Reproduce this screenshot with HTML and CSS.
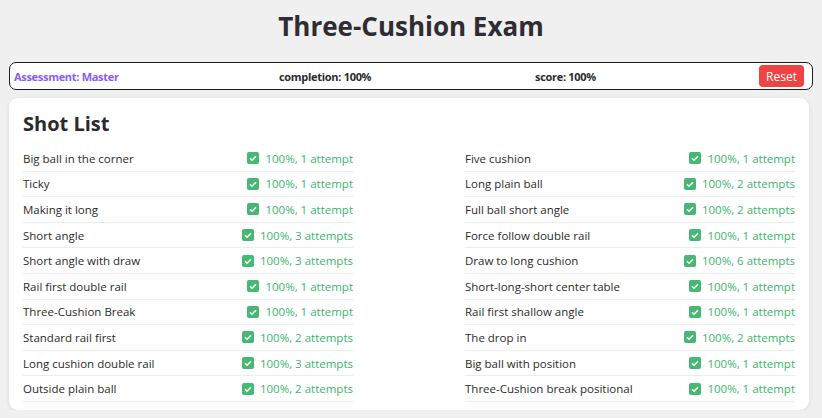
FILE: index.html
```html
<!DOCTYPE html>
<html lang="en">
<head>
    <meta charset="UTF-8">
    <meta name="viewport" content="width=device-width, initial-scale=1.0">
    <title>Three-Cushion Exam</title>
    <link rel="stylesheet" href="styles.css">
</head>
<body>

    <h1 class="title">Three-Cushion Exam</h1>

    <div class="status-bar">
        <span class="level">Assessment: Master</span>
        <span class="stat">completion: 100%</span>
        <span class="stat">score: 100%</span>
        <button class="reset">Reset</button>
    </div>

    <section class="card">
        <h2>Shot List</h2>
        <div class="shot-grid">
            <ul class="shots">
                <li><span>Big ball in the corner</span><span class="result"><i class="tick"></i>100%, 1 attempt</span></li>
                <li><span>Ticky</span><span class="result"><i class="tick"></i>100%, 1 attempt</span></li>
                <li><span>Making it long</span><span class="result"><i class="tick"></i>100%, 1 attempt</span></li>
                <li><span>Short angle</span><span class="result"><i class="tick"></i>100%, 3 attempts</span></li>
                <li><span>Short angle with draw</span><span class="result"><i class="tick"></i>100%, 3 attempts</span></li>
                <li><span>Rail first double rail</span><span class="result"><i class="tick"></i>100%, 1 attempt</span></li>
                <li><span>Three-Cushion Break</span><span class="result"><i class="tick"></i>100%, 1 attempt</span></li>
                <li><span>Standard rail first</span><span class="result"><i class="tick"></i>100%, 2 attempts</span></li>
                <li><span>Long cushion double rail</span><span class="result"><i class="tick"></i>100%, 3 attempts</span></li>
                <li><span>Outside plain ball</span><span class="result"><i class="tick"></i>100%, 2 attempts</span></li>
            </ul>
            <ul class="shots">
                <li><span>Five cushion</span><span class="result"><i class="tick"></i>100%, 1 attempt</span></li>
                <li><span>Long plain ball</span><span class="result"><i class="tick"></i>100%, 2 attempts</span></li>
                <li><span>Full ball short angle</span><span class="result"><i class="tick"></i>100%, 2 attempts</span></li>
                <li><span>Force follow double rail</span><span class="result"><i class="tick"></i>100%, 1 attempt</span></li>
                <li><span>Draw to long cushion</span><span class="result"><i class="tick"></i>100%, 6 attempts</span></li>
                <li><span>Short-long-short center table</span><span class="result"><i class="tick"></i>100%, 1 attempt</span></li>
                <li><span>Rail first shallow angle</span><span class="result"><i class="tick"></i>100%, 1 attempt</span></li>
                <li><span>The drop in</span><span class="result"><i class="tick"></i>100%, 2 attempts</span></li>
                <li><span>Big ball with position</span><span class="result"><i class="tick"></i>100%, 1 attempt</span></li>
                <li><span>Three-Cushion break positional</span><span class="result"><i class="tick"></i>100%, 1 attempt</span></li>
            </ul>
        </div>
    </section>

</body>
</html>
```

FILE: styles.css
```css
body {
    font-family: "Open Sans", "Noto Sans", Arial, sans-serif;
    background-color: #f0f0f0;
    color: #2b2b2b;
    margin: 0;
    padding: 0 9px 0 9px;
}

.title {
    text-align: center;
    font-size: 26px;
    font-weight: 700;
    color: #2d2d33;
    margin: 0;
    padding: 8px 0 0 0;
    height: 54px;
    line-height: 36px;
}

/* top summary bar */
.status-bar {
    display: grid;
    grid-template-columns: 265px 256px 1fr auto;
    align-items: center;
    background-color: #fff;
    border: 1px solid #1e1e1e;
    border-radius: 7px;
    padding: 2px 8px 2px 4px;
    height: 22px;
    font-size: 11px;
    font-weight: 700;
    letter-spacing: -0.3px;
}
.level {
    color: #8a5cf0;
}
.reset {
    font-family: inherit;
    background-color: #ef4444;
    color: #fff;
    border: none;
    border-radius: 4px;
    font-size: 12px;
    padding: 0 6px;
    height: 22px;
    width: 45px;
}

/* shot list card */
.card {
    background-color: #fff;
    border-radius: 9px;
    box-shadow: 0 1px 4px rgba(0, 0, 0, 0.1);
    margin: 8px 4px 0 0;
    padding: 11px 14px 8px 14px;
}
.card h2 {
    font-size: 20px;
    font-weight: 700;
    margin: 0 0 7px 0;
    line-height: 30px;
}
.shot-grid {
    display: grid;
    grid-template-columns: 1fr 1fr;
    column-gap: 112px;
}
.shots {
    list-style: none;
    margin: 0;
    padding: 0;
}
.shots li {
    display: flex;
    justify-content: space-between;
    align-items: center;
    height: 24.6px;
    border-bottom: 1px solid #ececec;
    font-size: 11.5px;
}
.result {
    display: flex;
    align-items: center;
    color: #3bb56c;
}
.tick {
    display: inline-block;
    width: 12px;
    height: 12px;
    margin-right: 6px;
    border-radius: 2px;
    background: #47b874 url("data:image/svg+xml,%3Csvg xmlns='http://www.w3.org/2000/svg' viewBox='0 0 12 12'%3E%3Cpath d='M3 6.2l2 2 4-4' fill='none' stroke='white' stroke-width='1.5'/%3E%3C/svg%3E") no-repeat center;
}
```
